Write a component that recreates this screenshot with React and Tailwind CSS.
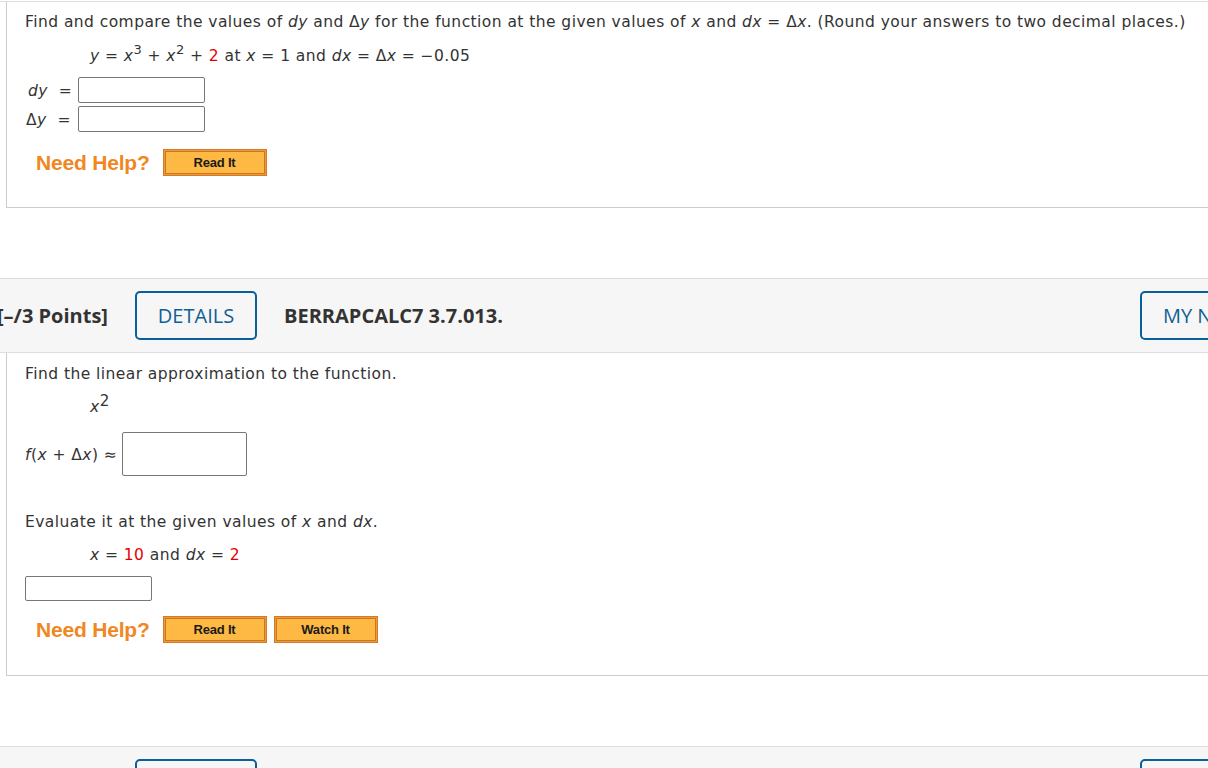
import React from "react";

const body = { fontFamily: '"DejaVu Sans", Verdana, sans-serif' };
const head = { fontFamily: '"Open Sans", "Noto Sans", sans-serif' };
const arial = { fontFamily: '"Liberation Sans", Arial, sans-serif' };

function Input({ w, h }) {
  return (
    <span
      className="inline-block border border-[#777] rounded-[2px] bg-white align-middle"
      style={{ width: w, height: h }}
    />
  );
}

function HelpBtn({ label }) {
  return (
    <span className="inline-flex w-[104px] h-[27px] bg-[#ee9a3a] p-[1px] border border-[#d47a20]">
      <span
        className="flex-1 flex items-center justify-center bg-[#fdb943] border border-[#c8772a] text-[13px] font-bold text-[#1a1a1a] tracking-[-0.2px]"
        style={arial}
      >
        {label}
      </span>
    </span>
  );
}

function NeedHelp({ buttons }) {
  return (
    <div className="flex items-center gap-[7px]">
      <span className="text-[21px] font-bold text-[#f0871f] mr-[6px] ml-[11px] tracking-[-0.2px]" style={arial}>
        Need Help?
      </span>
      {buttons.map((b) => (
        <HelpBtn key={b} label={b} />
      ))}
    </div>
  );
}

function Header() {
  return (
    <div
      className="h-[75px] bg-[#f6f6f6] border-y border-[#dedede] flex items-center text-[20px] text-[#333]"
      style={head}
    >
      <span className="font-bold ml-[-3px] w-[138px] whitespace-nowrap">[–/3 Points]</span>
      <span className="w-[122px] h-[49px] border-2 border-[#08609b] rounded-[5px] flex items-center justify-center text-[#105f95]">
        DETAILS
      </span>
      <span className="font-bold ml-[27px]">BERRAPCALC7 3.7.013.</span>
      <span className="ml-auto mr-[-70px] w-[138px] h-[49px] border-2 border-[#08609b] rounded-[5px] flex items-center pl-[21px] text-[#105f95] whitespace-nowrap">
        MY NOTES
      </span>
    </div>
  );
}

function Sup({ children }) {
  return <sup className="text-[13px] relative top-[-7px] leading-none">{children}</sup>;
}

export default function App() {
  return (
    <div className="w-[1208px] h-[768px] overflow-hidden bg-white text-[#333]" style={body}>
      <div className="h-[2px] border-b border-[#dedede]" />
      {/* panel 1 */}
      <div className="ml-[6px] h-[206px] border-l border-b border-[#cccccc] pl-[18px] text-[15.5px] tracking-[0.44px]">
        <div className="pt-[10px] leading-[20px] whitespace-nowrap">
          Find and compare the values of <i>dy</i> and Δ<i>y</i> for the function at the given values of <i>x</i> and <i>dx</i> = Δ<i>x</i>. (Round your answers to two decimal places.)
        </div>
        <div className="mt-[14px] ml-[65px] leading-[20px]">
          <i>y</i> = <i>x</i>
          <Sup>3</Sup> + <i>x</i>
          <Sup>2</Sup> + <span className="text-[#e50000]">2</span> at <i>x</i> = 1 and <i>dx</i> = Δ<i>x</i> = −0.05
        </div>
        <div className="mt-[11px] flex flex-col gap-[3px]">
          <div className="flex items-center h-[26px]">
            <span className="w-[53px] pl-[3px] pt-[3px]"><i>dy</i>&nbsp;&nbsp;=</span>
            <Input w={127} h={26} />
          </div>
          <div className="flex items-center h-[26px]">
            <span className="w-[53px] pl-[1px] pt-[3px]">Δ<i>y</i>&nbsp;&nbsp;=</span>
            <Input w={127} h={26} />
          </div>
        </div>
        <div className="mt-[15px]">
          <NeedHelp buttons={["Read It"]} />
        </div>
      </div>

      <div className="h-[70px]" />
      <Header />

      {/* panel 2 */}
      <div className="ml-[6px] h-[323px] border-l border-b border-[#cccccc] pl-[18px] text-[15.5px] tracking-[0.44px]">
        <div className="pt-[11px] leading-[20px]">Find the linear approximation to the function.</div>
        <div className="mt-[13px] ml-[65px] leading-[20px]">
          <i>x</i>
          <sup className="text-[15px] relative top-[-6px] leading-none">2</sup>
        </div>
        <div className="mt-[15px] flex items-center h-[44px]">
          <span className="w-[97px] whitespace-nowrap pt-[3px]"><i>f</i>(<i>x</i> + Δ<i>x</i>) ≈</span>
          <Input w={125} h={44} />
        </div>
        <div className="mt-[36px] leading-[20px]">
          Evaluate it at the given values of <i>x</i> and <i>dx</i>.
        </div>
        <div className="mt-[13px] ml-[65px] leading-[20px]">
          <i>x</i> = <span className="text-[#e50000]">10</span> and <i>dx</i> = <span className="text-[#e50000]">2</span>
        </div>
        <div className="mt-[11px] flex">
          <Input w={127} h={25} />
        </div>
        <div className="mt-[13px]">
          <NeedHelp buttons={["Read It", "Watch It"]} />
        </div>
      </div>

      <div className="h-[70px]" />
      <Header />
    </div>
  );
}
